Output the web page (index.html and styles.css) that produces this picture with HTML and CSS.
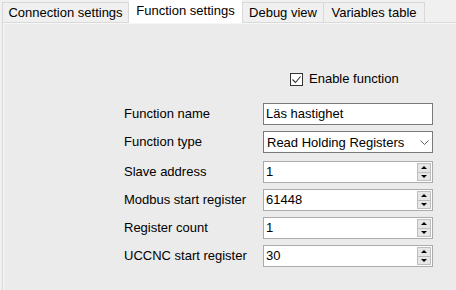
FILE: index.html
```html
<!DOCTYPE html>
<html>
<head>
<meta charset="utf-8">
<link rel="stylesheet" href="styles.css">
</head>
<body>
<div class="window">
  <div class="tabs">
    <div class="tab tab-conn">Connection settings</div>
    <div class="tab tab-func active">Function settings</div>
    <div class="tab tab-debug">Debug view</div>
    <div class="tab tab-vars">Variables table</div>
  </div>
  <div class="panel">
    <div class="check-row">
      <span class="checkbox"><svg width="11" height="11" viewBox="0 0 11 11"><polyline points="1.5,5.5 4.5,8.5 9.5,2.5" fill="none" stroke="#333" stroke-width="1.1"/></svg></span>
      <span class="check-label">Enable function</span>
    </div>
    <div class="form">
      <div class="label">Function name</div>
      <div class="textbox">Läs hastighet</div>

      <div class="label label-combo">Function type</div>
      <div class="combo"><span>Read Holding Registers</span><svg class="chev" width="9" height="5" viewBox="0 0 9 5"><polyline points="0.5,0.5 4.5,4.5 8.5,0.5" fill="none" stroke="#606060" stroke-width="1"/></svg></div>

      <div class="label">Slave address</div>
      <div class="spin"><span class="spin-value">1</span><span class="spin-btns"><span class="spin-btn"><svg width="6" height="3" viewBox="0 0 6 3"><polygon points="0,3 3,0 6,3" fill="#000"/></svg></span><span class="spin-btn spin-down"><svg width="6" height="3" viewBox="0 0 6 3"><polygon points="0,0 3,3 6,0" fill="#000"/></svg></span></span></div>

      <div class="label">Modbus start register</div>
      <div class="spin"><span class="spin-value">61448</span><span class="spin-btns"><span class="spin-btn"><svg width="6" height="3" viewBox="0 0 6 3"><polygon points="0,3 3,0 6,3" fill="#000"/></svg></span><span class="spin-btn spin-down"><svg width="6" height="3" viewBox="0 0 6 3"><polygon points="0,0 3,3 6,0" fill="#000"/></svg></span></span></div>

      <div class="label">Register count</div>
      <div class="spin"><span class="spin-value">1</span><span class="spin-btns"><span class="spin-btn"><svg width="6" height="3" viewBox="0 0 6 3"><polygon points="0,3 3,0 6,3" fill="#000"/></svg></span><span class="spin-btn spin-down"><svg width="6" height="3" viewBox="0 0 6 3"><polygon points="0,0 3,3 6,0" fill="#000"/></svg></span></span></div>

      <div class="label">UCCNC start register</div>
      <div class="spin"><span class="spin-value">30</span><span class="spin-btns"><span class="spin-btn"><svg width="6" height="3" viewBox="0 0 6 3"><polygon points="0,3 3,0 6,3" fill="#000"/></svg></span><span class="spin-btn spin-down"><svg width="6" height="3" viewBox="0 0 6 3"><polygon points="0,0 3,3 6,0" fill="#000"/></svg></span></span></div>
    </div>
  </div>
</div>
</body>
</html>
```
FILE: styles.css
```css
html, body {
  margin: 0;
  height: 100%;
}
body {
  background: #f0f0f0;
  font: 13px "Liberation Sans", Arial, sans-serif;
  color: #000;
  overflow: hidden;
}
.window {
  display: flex;
  flex-direction: column;
  height: 290px;
  padding-left: 2px;
}
.tabs {
  display: flex;
  align-items: flex-end;
  height: 22px;
  flex: none;
}
.tab {
  box-sizing: border-box;
  height: 20px;
  border: 1px solid #d9d9d9;
  border-bottom: none;
  background: #f0f0f0;
  text-align: center;
  line-height: 19px;
  white-space: nowrap;
}
.tab-conn { width: 127px; }
.tab.active {
  width: 113px;
  height: 23px;
  margin-bottom: -1px;
  border: none;
  background: #fff;
  padding-top: 1px;
  position: relative;
  z-index: 1;
}
.tab-debug { width: 81px; border-right: none; }
.tab-vars { width: 102px; }
.panel {
  flex: 1;
  background: #ebebeb;
  border-top: 1px solid #d9d9d9;
  border-left: 1px solid #d9d9d9;
  box-shadow: inset 1px 1px 0 #f7f7f7;
  padding: 48px 0 0 121px;
}
.check-row {
  display: flex;
  align-items: flex-start;
  height: 17px;
  margin-left: 166px;
}
.checkbox {
  box-sizing: border-box;
  width: 13px;
  height: 13px;
  margin-top: 2px;
  margin-right: 6px;
  border: 1px solid #333;
  background: #fff;
  display: flex;
}
.check-label {
  line-height: 15px;
}
.form {
  display: grid;
  grid-template-columns: 139px 170px;
  row-gap: 6px;
  margin-top: 15px;
  align-items: start;
}
.label {
  height: 22px;
  line-height: 22px;
  white-space: nowrap;
}
.label-combo { margin-bottom: 2px; }
.textbox {
  box-sizing: border-box;
  height: 22px;
  border: 1px solid #7a7a7a;
  background: #fff;
  padding-left: 2px;
  line-height: 20px;
}
.combo {
  box-sizing: border-box;
  height: 22px;
  margin-bottom: 2px;
  border: 1px solid #7a7a7a;
  background: #fff;
  padding: 0 3px 0 3px;
  display: flex;
  align-items: center;
  justify-content: space-between;
}
.chev { margin-top: 1px; }
.spin {
  box-sizing: border-box;
  height: 22px;
  border: 1px solid #ababab;
  background: #fff;
  padding: 1px;
  display: flex;
}
.spin-value {
  flex: 1;
  line-height: 18px;
  padding-left: 1px;
}
.spin-btns {
  width: 14px;
  display: flex;
  flex-direction: column;
}
.spin-btn {
  box-sizing: border-box;
  flex: 1;
  background: #e6e6e6;
  border: 1px solid #bdbdbd;
  display: flex;
  align-items: center;
  justify-content: center;
}
.spin-down { border-top: none; }
```
